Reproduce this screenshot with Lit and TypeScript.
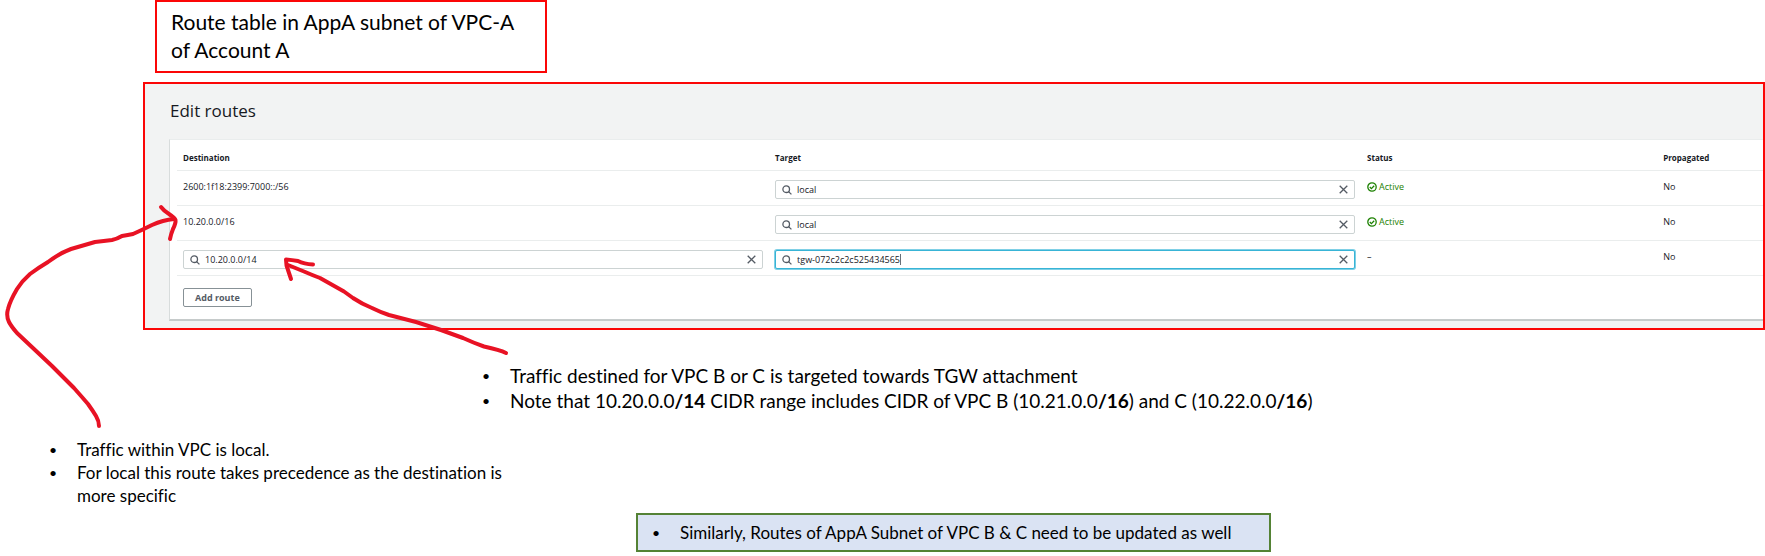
import { LitElement, html, css, svg, nothing } from "lit";
import { customElement, property } from "lit/decorators.js";
import { classMap } from "lit/directives/class-map.js";

interface Route {
  destination: string;
  target: string;
  active: boolean;
  propagated: string;
  draft?: boolean;
}

const ROUTES: Route[] = [
  { destination: "2600:1f18:2399:7000::/56", target: "local", active: true, propagated: "No" },
  { destination: "10.20.0.0/16", target: "local", active: true, propagated: "No" },
  { destination: "10.20.0.0/14", target: "tgw-072c2c2c525434565", active: false, propagated: "No", draft: true },
];

@customElement("search-field")
class SearchField extends LitElement {
  @property() value = "";
  @property() label = "";
  @property({ type: Boolean }) current = false;

  static styles = css`
    :host { display: block; }
    .field {
      display: flex;
      align-items: center;
      box-sizing: border-box;
      height: 19px;
      padding: 0 6px;
      border: 1px solid #ccd3d3;
      border-radius: 2px;
      background: #fff;
    }
    .current { border-color: #38b4d6; box-shadow: 0 0 0 1px #7fd0e6; }
    .glass { width: 10px; height: 10px; margin-right: 5px; flex: none; }
    input {
      flex: 1;
      min-width: 0;
      height: 17px;
      padding: 0;
      border: 0;
      outline: 0;
      background: none;
      color: #16191f;
      font: 500 9px/17px "Open Sans", sans-serif;
    }
    .current input { flex: none; field-sizing: content; }
    .caret { width: 1px; height: 11px; margin-right: auto; background: #687078; }
    button { display: flex; padding: 0; border: 0; background: none; }
    .cross { width: 9px; height: 9px; }
  `;

  render() {
    return html`<div class=${classMap({ field: true, current: this.current })}>
      <svg class="glass" viewBox="0 0 10 10" fill="none" stroke="#545b64" stroke-width="1.3" aria-hidden="true">
        <circle cx="4.2" cy="4.2" r="3.3" /><path d="M6.6 6.6 9.4 9.4" />
      </svg>
      <input type="text" aria-label=${this.label} .value=${this.value} />
      ${this.current ? html`<span class="caret"></span>` : nothing}
      <button type="button" aria-label="Clear">
        <svg class="cross" viewBox="0 0 9 9" fill="none" stroke="#545b64" stroke-width="1.3" aria-hidden="true">
          <path d="M.7.7l7.6 7.6M8.3.7.7 8.3" />
        </svg>
      </button>
    </div>`;
  }
}

@customElement("route-editor")
class RouteEditor extends LitElement {
  static styles = css`
    :host {
      display: block;
      box-sizing: border-box;
      padding: 15px 0 7px 24px;
      border: 2px solid #fb0606;
      background: #f2f3f3;
      color: #16191f;
      font: 500 9px/12px "Open Sans", sans-serif;
    }
    h1 { margin: 0 0 16px 1px; font: 400 17px/24px "Open Sans", sans-serif; }
    .card {
      padding-left: 7px;
      border: 1px solid #d8dcdc;
      border-top-color: #eaeded;
      border-bottom: 2px solid #c6cbcb;
      border-right: 0;
      background: #fff;
    }
    table { width: 100%; border-collapse: separate; border-spacing: 0; table-layout: fixed; }
    .wide { width: 37.33%; }
    .narrow { width: 18.67%; }
    th, td { box-sizing: border-box; padding: 0 6px; border-bottom: 1px solid #eaeded; text-align: left; }
    th { height: 31px; padding-top: 6px; font-weight: 700; font-size: 8px; }
    td { height: 35px; padding-top: 10px; vertical-align: top; }
    .control { padding-top: 9px; }
    .status { display: flex; align-items: center; gap: 2px; color: #1d8102; }
    .status svg { width: 10px; height: 10px; }
    .add {
      display: block;
      height: 19px;
      margin: 12px 6px;
      padding: 0 11px;
      border: 1px solid #879196;
      border-radius: 2px;
      background: #fff;
      color: #545b64;
      font: 700 9px/17px "Open Sans", sans-serif;
    }
  `;

  private status(active: boolean) {
    if (!active) return "–";
    return html`<span class="status">
      <svg viewBox="0 0 10 10" fill="none" stroke="currentColor" stroke-width="1.3" aria-hidden="true">
        <circle cx="5" cy="5" r="4.2" /><path d="M2.8 5l1.6 1.6 2.8-2.9" />
      </svg>Active</span>`;
  }

  render() {
    return html`
      <h1>Edit routes</h1>
      <div class="card">
        <table>
          <colgroup><col class="wide" /><col class="wide" /><col class="narrow" /><col /></colgroup>
          <thead>
            <tr><th>Destination</th><th>Target</th><th>Status</th><th>Propagated</th></tr>
          </thead>
          <tbody>
            ${ROUTES.map((r) => html`<tr>
              ${r.draft
                ? html`<td class="control"><search-field label="Destination" .value=${r.destination}></search-field></td>`
                : html`<td>${r.destination}</td>`}
              <td class="control"><search-field label="Target" .value=${r.target} ?current=${!!r.draft}></search-field></td>
              <td>${this.status(r.active)}</td>
              <td>${r.propagated}</td>
            </tr>`)}
          </tbody>
        </table>
        <button class="add" type="button">Add route</button>
      </div>`;
  }
}

@customElement("app-root")
class AppRoot extends LitElement {
  static styles = css`
    :host {
      display: block;
      position: relative;
      overflow: hidden;
      background: #fff;
      color: #000;
      font-family: Lato, sans-serif;
      font-variant-ligatures: none;
    }
    .title {
      box-sizing: border-box;
      width: 392px;
      margin: 0 0 9px 155px;
      padding: 6px 14px 7px;
      border: 2px solid #fb0606;
      font-size: 21px;
      line-height: 28px;
    }
    route-editor { margin-left: 143px; }
    ul { margin: 0; padding: 0; list-style: none; }
    li { display: flex; }
    li::before { content: "•"; flex: none; width: 28px; font-size: 14px; }
    .remote { margin: 33px 0 0 482px; font-size: 19px; line-height: 25px; }
    .local { width: 480px; margin: 25px 0 0 49px; font-size: 17px; line-height: 23px; }
    .similar {
      box-sizing: border-box;
      width: 635px;
      margin: 6px 0 4px 636px;
      padding: 5px 14px;
      border: 2px solid #548235;
      background: #dae3f3;
      font-size: 17px;
      line-height: 25px;
    }
    .ink { position: absolute; top: 0; left: 0; width: 520px; height: 440px; pointer-events: none; }
  `;

  render() {
    return html`
      <div class="title">Route table in AppA subnet of VPC-A of Account A</div>
      <route-editor></route-editor>
      <ul class="remote">
        <li><span>Traffic destined for VPC B or C is targeted towards TGW attachment</span></li>
        <li><span>Note that 10.20.0.0<b>/14</b> CIDR range includes CIDR of VPC B (10.21.0.0<b>/16</b>) and C (10.22.0.0<b>/16</b>)</span></li>
      </ul>
      <ul class="local">
        <li><span>Traffic within VPC is local.</span></li>
        <li><span>For local this route takes precedence as the destination is more specific</span></li>
      </ul>
      <ul class="similar">
        <li><span>Similarly, Routes of AppA Subnet of VPC B &amp; C need to be updated as well</span></li>
      </ul>
      <svg class="ink" viewBox="0 0 520 440" fill="none" stroke="#e81224" stroke-width="4" stroke-linecap="round" stroke-linejoin="round" aria-hidden="true">
        ${svg`
          <path d="M99 426Q99 421 96 416Q93 411 88 404Q82 397 74 388Q63 377 52 366L34 349L17 333Q11 326 9 322Q6 316 8 309Q10 301 17 289Q22 281 30 274Q38 268 48 262Q60 253 71 249L95 242Q104 241 112 240Q117 239 122 236Q128 235 133 234Q142 230 152 225Q163 220 174 219" />
          <path d="M161 207Q164 211 169 214Q175 218 175.500 220Q176 223 173 229Q171 234 170 239" />
          <path d="M506 353Q500 350 484 346.500Q474 343 463 338L441 330Q415 321 389 315Q380 312 372 308Q362 304 353 298L344 291.500L320 278Q312 275 304 271.500L288 265" />
          <path d="M313 264.500Q304 264 298 261Q292 260 286 259.500Q286 266 288 270L291 279" />`}
      </svg>`;
  }
}
